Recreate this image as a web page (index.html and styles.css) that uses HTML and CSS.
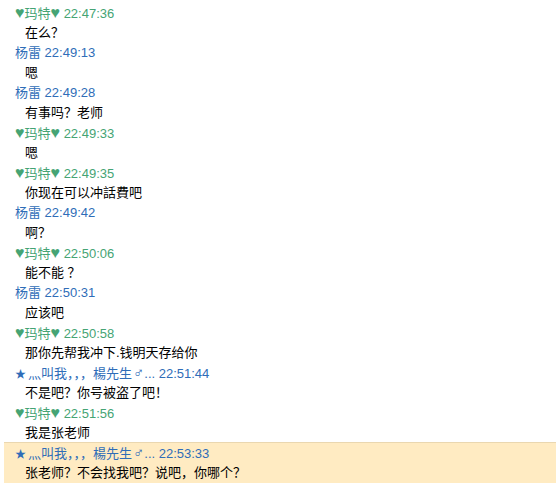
FILE: index.html
```html
<!DOCTYPE html>
<html>
<head>
<meta charset="utf-8">
<link rel="stylesheet" href="styles.css">
</head>
<body>
<div class="log">
  <div class="entry"><div class="head green"><span class="heart">♥</span>玛特<span class="heart">♥</span> 22:47:36</div><div class="msg">在么？</div></div>
  <div class="entry"><div class="head blue">杨雷 22:49:13</div><div class="msg">嗯</div></div>
  <div class="entry"><div class="head blue">杨雷 22:49:28</div><div class="msg">有事吗？老师</div></div>
  <div class="entry"><div class="head green"><span class="heart">♥</span>玛特<span class="heart">♥</span> 22:49:33</div><div class="msg">嗯</div></div>
  <div class="entry"><div class="head green"><span class="heart">♥</span>玛特<span class="heart">♥</span> 22:49:35</div><div class="msg">你现在可以冲話費吧</div></div>
  <div class="entry"><div class="head blue">杨雷 22:49:42</div><div class="msg">啊？</div></div>
  <div class="entry"><div class="head green"><span class="heart">♥</span>玛特<span class="heart">♥</span> 22:50:06</div><div class="msg">能不能 ？</div></div>
  <div class="entry"><div class="head blue">杨雷 22:50:31</div><div class="msg">应该吧</div></div>
  <div class="entry"><div class="head green"><span class="heart">♥</span>玛特<span class="heart">♥</span> 22:50:58</div><div class="msg">那你先帮我冲下.钱明天存给你</div></div>
  <div class="entry"><div class="head blue"><span class="star">★</span>灬叫我，，，楊先生<span class="male">♂</span>... 22:51:44</div><div class="msg">不是吧？你号被盗了吧！</div></div>
  <div class="entry"><div class="head green"><span class="heart">♥</span>玛特<span class="heart">♥</span> 22:51:56</div><div class="msg">我是张老师</div></div>
  <div class="entry selected"><div class="head blue"><span class="star">★</span>灬叫我，，，楊先生<span class="male">♂</span>... 22:53:33</div><div class="msg">张老师？不会找我吧？说吧，你哪个？</div></div>
</div>
</body>
</html>
```
FILE: styles.css
```css
html, body {
  margin: 0;
  padding: 0;
  background: #ffffff;
}
body {
  font-family: "Liberation Sans", "Noto Sans CJK SC", sans-serif;
  font-size: 13px;
}
.log {
  padding-top: 3px;
  display: flex;
  flex-direction: column;
}
.entry {
  display: flex;
  flex-direction: column;
}
.head {
  height: 20px;
  line-height: 20px;
  padding-left: 15px;
  white-space: nowrap;
}
.green { color: #45a474; }
.blue { color: #2f6db8; }
.heart { font-size: 16px; }
.star { font-size: 11px; margin-right: 2px; }
.male { font-size: 15px; font-style: italic; margin-left: 1px; }
.msg {
  height: 20px;
  line-height: 20px;
  padding-left: 25px;
  color: #000;
  white-space: nowrap;
}
.selected {
  margin-left: 4px;
  margin-top: -1px;
  background: #ffebc2;
  border-top: 1px solid #ead7b0;
}
.selected .head { padding-left: 11px; }
.selected .msg { padding-left: 21px; }
```
